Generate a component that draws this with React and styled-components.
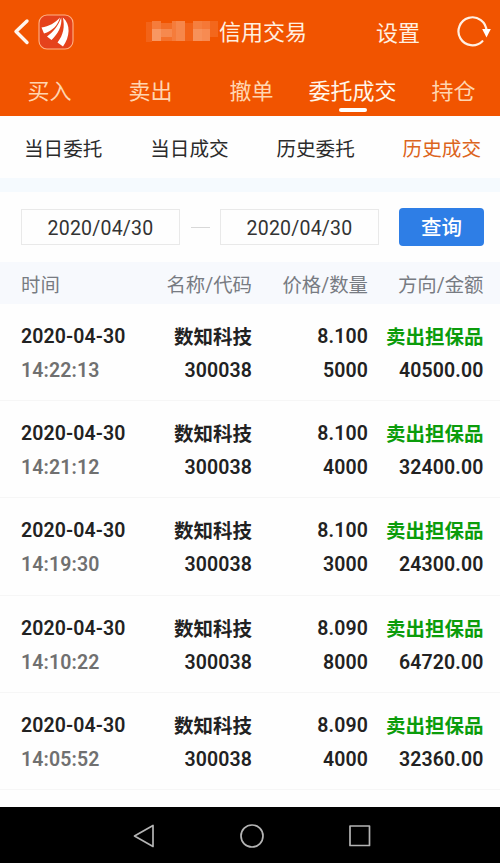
import styled, { createGlobalStyle } from 'styled-components';

const GlobalStyle = createGlobalStyle`
	* {
		box-sizing: border-box;
	}
	body {
		margin: 0;
		background-color: #fefefe;
		font-family: Roboto, 'Noto Sans CJK SC', sans-serif;
		color: #222222;
	}
	button {
		margin: 0;
		padding: 0;
		border: none;
		background: none;
		font-family: inherit;
		color: inherit;
		white-space: nowrap;
	}
`;

const Screen = styled.div`
	display: flex;
	flex-direction: column;
	width: 500px;
	height: 863px;
	overflow: hidden;
`;

const Top = styled.header`
	flex: none;
	height: 116px;
	overflow: hidden;
	background-color: #f15400;
	color: #fff0e0;
`;

const TitleBar = styled.div`
	display: flex;
	align-items: center;
	height: 64px;
	padding: 0 8px 0 12px;
`;

const BackIcon = styled.svg`
	display: block;
	width: 18px;
	height: 28px;
	margin-right: 8px;
`;

const Logo = styled.svg`
	display: block;
	width: 36px;
	height: 36px;
`;

const Title = styled.h1`
	display: flex;
	align-items: center;
	margin: 0 0 0 71px;
	padding-top: 2px;
	font-size: 22px;
	line-height: 32px;
	font-weight: 400;
	white-space: nowrap;
`;

const Mosaic = styled.svg`
	display: block;
	width: 74px;
	height: 24px;
	margin-top: -4px;
`;

const Setting = styled.button`
	margin-left: auto;
	padding-top: 3px;
	font-size: 22px;
	line-height: 32px;
`;

const RefreshIcon = styled.svg`
	display: block;
	width: 36px;
	height: 34px;
	margin: -2px 0 0 36px;
`;

const MainTabs = styled.nav`
	display: grid;
	grid-template-columns: repeat(5, 101px);
	height: 52px;
	margin-left: -1px;
`;

const MainTab = styled.button`
	display: flex;
	flex-direction: column;
	align-items: center;
	padding-top: 12px;
	font-size: 22px;
	line-height: 32px;
	color: ${(props) => (props.$active ? '#fff6ea' : '#ffd5b0')};

	&::after {
		content: '';
		width: 28px;
		height: 4px;
		border-radius: 2px;
		background-color: ${(props) => (props.$active ? '#ffffff' : 'transparent')};
	}
`;

const SubTabs = styled.nav`
	display: flex;
	flex: none;
	justify-content: space-between;
	align-items: center;
	height: 62px;
	padding: 5px 19px 0 24px;
`;

const SubTab = styled.button`
	font-size: 19.6px;
	line-height: 28px;
	color: ${(props) => (props.$active ? '#dc6420' : '#2b2b2b')};
`;

const Gap = styled.div`
	flex: none;
	height: 14px;
	background-color: #f5fafe;
`;

const Filter = styled.div`
	display: flex;
	flex: none;
	align-items: center;
	height: 70px;
	padding: 0 16px 0 21px;
`;

const DateBox = styled.div`
	width: 159px;
	height: 36px;
	border: 1px solid #e9e9e9;
	font-size: 19.5px;
	line-height: 37px;
	letter-spacing: 0.2px;
	text-align: center;
	color: #333333;
`;

const Dash = styled.span`
	width: 19px;
	height: 1px;
	margin: 0 10.5px;
	background-color: #d8d8d8;
`;

const QueryBtn = styled.button`
	width: 85px;
	height: 38px;
	margin-left: auto;
	border-radius: 4px;
	background-color: #2e7ee6;
	font-size: 20.5px;
	font-weight: 500;
	line-height: 40px;
	color: #ffffff;
`;

const Columns = styled.div`
	display: grid;
	flex: none;
	grid-template-columns: 106px 125px 116px 115.5px;
	padding-left: 21px;
	text-align: right;
	white-space: nowrap;

	& > :first-child {
		text-align: left;
	}
`;

const TableHead = styled(Columns)`
	height: 42px;
	background-color: #f7f9fd;
	font-size: 19.4px;
	line-height: 47px;
	color: #777b82;
`;

const Row = styled(Columns)`
	height: 97.2px;
	padding-top: 16px;
	border-bottom: 1px solid #f6f6f6;
	font-size: 19.5px;
	line-height: 34px;
	font-weight: 600;
`;

const Num = styled.div`
	letter-spacing: 0.12px;
	color: ${(props) => (props.$muted ? '#707070' : '#222222')};
`;

const Name = styled.div`
	height: 34px;
	line-height: 36px;
	color: ${(props) => (props.$sell ? '#0b9c0b' : '#222222')};
`;

const List = styled.main`
	flex: 1;
	min-height: 0;
	overflow: hidden;
`;

const SystemBar = styled.footer`
	display: flex;
	flex: none;
	align-items: center;
	justify-content: center;
	gap: 84px;
	height: 56px;
	padding-left: 4px;
	background-color: #000000;
`;

const SystemIcon = styled.svg`
	display: block;
	width: 24px;
	height: 24px;
	margin-top: 1px;
	fill: none;
	stroke: #b4b4b4;
	stroke-width: 1.7;
	stroke-linejoin: round;
`;

const mainTabs = ['买入', '卖出', '撤单', '委托成交', '持仓'];
const subTabs = ['当日委托', '当日成交', '历史委托', '历史成交'];

const deals = [
	{ time: '14:22:13', price: '8.100', count: '5000', amount: '40500.00' },
	{ time: '14:21:12', price: '8.100', count: '4000', amount: '32400.00' },
	{ time: '14:19:30', price: '8.100', count: '3000', amount: '24300.00' },
	{ time: '14:10:22', price: '8.090', count: '8000', amount: '64720.00' },
	{ time: '14:05:52', price: '8.090', count: '4000', amount: '32360.00' },
];

// x, y, width, height, opacity
const blocks = [
	[1, 3, 6, 20, 0.12],
	[7, 2, 9, 8, 0.3],
	[7, 10, 9, 12, 0.5],
	[16, 4, 11, 6, 0.2],
	[16, 10, 11, 8, 0.4],
	[16, 18, 11, 4, 0.22],
	[27, 2, 4, 20, 0.3],
	[31, 2, 9, 20, 0.38],
	[40, 4, 8, 18, 0.12],
	[48, 2, 9, 8, 0.32],
	[48, 10, 9, 12, 0.46],
	[57, 2, 8, 8, 0.28],
	[57, 10, 8, 12, 0.42],
	[65, 2, 8, 16, 0.14],
];

function App() {
	return (
		<>
			<GlobalStyle />
			<Screen>
				<Top>
					<TitleBar>
						<BackIcon viewBox='0 0 18 28' fill='none'>
							<path
								d='M15 3 L4 13.5 L15 24.5'
								stroke='#fff6ee'
								strokeWidth='3.4'
								strokeLinecap='round'
								strokeLinejoin='round'
							/>
						</BackIcon>
						<Logo viewBox='0 0 36 36'>
							<rect x='1' y='1' width='34' height='34' rx='8' fill='#e5421c' stroke='#ffb285' strokeWidth='1.1' />
							<g fill='#ffffff'>
								<path d='M3.5 13.5 C11 12.5 17 9 22 3.5 C20 11 14.5 17 6 19.5 Z' />
								<path d='M23.2 3.5 C24.5 12 19.5 20.5 13.5 26 L9 22.5 C16 17.5 20.5 11 23.2 3.5 Z' />
								<path d='M24.8 3.5 C33 10 32 23 25 32.5 L19.5 28.5 C25.5 21 27 12 24.8 3.5 Z' />
							</g>
						</Logo>
						<Title>
							<Mosaic viewBox='0 0 74 24' shapeRendering='crispEdges'>
								{blocks.map(([x, y, w, h, o]) => (
									<rect key={`${x}-${y}`} x={x} y={y} width={w} height={h} fill='#ffd9c4' opacity={o} />
								))}
							</Mosaic>
							信用交易
						</Title>
						<Setting>设置</Setting>
						<RefreshIcon viewBox='0 0 36 34' fill='none'>
							<path d='M26.4 27.2 A14 14 0 1 1 30.5 17' stroke='#fff0e4' strokeWidth='2.2' strokeLinecap='round' />
							<path d='M26.2 15 H34.8 L30.5 23.5 Z' fill='#ffffff' />
						</RefreshIcon>
					</TitleBar>
					<MainTabs>
						{mainTabs.map((tab) => (
							<MainTab key={tab} $active={tab === '委托成交'}>
								{tab}
							</MainTab>
						))}
					</MainTabs>
				</Top>
				<SubTabs>
					{subTabs.map((tab) => (
						<SubTab key={tab} $active={tab === '历史成交'}>
							{tab}
						</SubTab>
					))}
				</SubTabs>
				<Gap />
				<Filter>
					<DateBox>2020/04/30</DateBox>
					<Dash />
					<DateBox>2020/04/30</DateBox>
					<QueryBtn>查询</QueryBtn>
				</Filter>
				<TableHead>
					<div>时间</div>
					<div>名称/代码</div>
					<div>价格/数量</div>
					<div>方向/金额</div>
				</TableHead>
				<List>
					{deals.map((deal) => (
						<Row key={deal.time}>
							<div>
								<Num>2020-04-30</Num>
								<Num $muted>{deal.time}</Num>
							</div>
							<div>
								<Name>数知科技</Name>
								<Num>300038</Num>
							</div>
							<div>
								<Num>{deal.price}</Num>
								<Num>{deal.count}</Num>
							</div>
							<div>
								<Name $sell>卖出担保品</Name>
								<Num>{deal.amount}</Num>
							</div>
						</Row>
					))}
				</List>
				<SystemBar>
					<SystemIcon viewBox='0 0 24 24'>
						<path d='M2.5 12 L21 1.5 V22.5 Z' />
					</SystemIcon>
					<SystemIcon viewBox='0 0 24 24'>
						<circle cx='12' cy='12' r='11' />
					</SystemIcon>
					<SystemIcon viewBox='0 0 24 24'>
						<rect x='2' y='2' width='19.5' height='19.5' />
					</SystemIcon>
				</SystemBar>
			</Screen>
		</>
	);
}

export default App;
